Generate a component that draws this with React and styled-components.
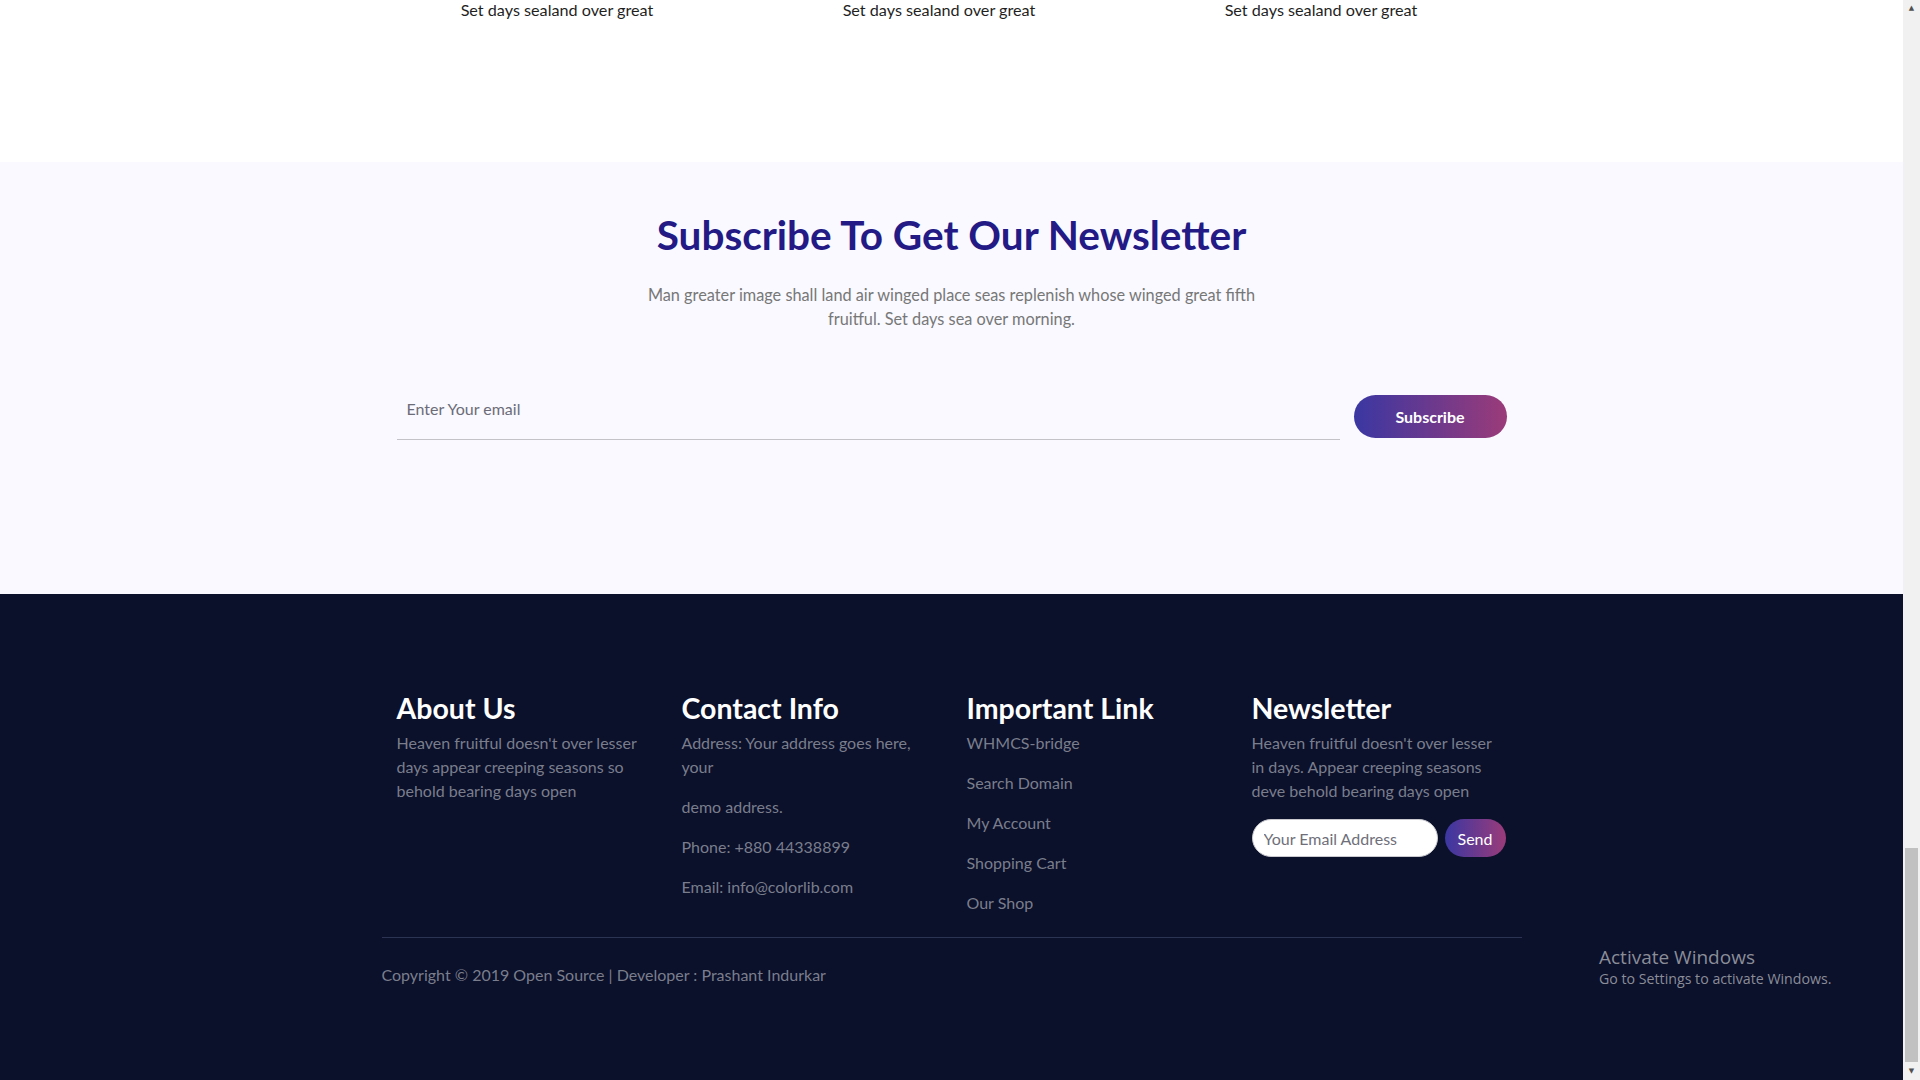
import React from 'react'
import styled, { createGlobalStyle } from 'styled-components';

const features = ["Set days sealand over great", "Set days sealand over great", "Set days sealand over great"];
const links = ["WHMCS-bridge", "Search Domain", "My Account", "Shopping Cart", "Our Shop"];

function App() {
  return (
    <Screen>
      <GlobalStyle />
      <Page>
        <FeatureStrip>
          <FeatureRow>
            {features.map((text, i) => (
              <FeatureCaption key={i}>{text}</FeatureCaption>
            ))}
          </FeatureRow>
        </FeatureStrip>

        <SubscribeSection>
          <SubscribeTitle>Subscribe To Get Our Newsletter</SubscribeTitle>
          <SubscribeText>
            Man greater image shall land air winged place seas replenish whose winged great fifth
            fruitful. Set days sea over morning.
          </SubscribeText>
          <SubscribeForm onSubmit={(e) => e.preventDefault()}>
            <EmailInput type="email" placeholder="Enter Your email" />
            <GradientButton type="submit" big>Subscribe</GradientButton>
          </SubscribeForm>
        </SubscribeSection>

        <Footer>
          <FooterColumns>
            <FooterCol>
              <ColTitle>About Us</ColTitle>
              <FooterText>
                Heaven fruitful doesn't over lesser days appear creeping seasons so behold bearing days open
              </FooterText>
            </FooterCol>
            <FooterCol>
              <ColTitle>Contact Info</ColTitle>
              <FooterText spaced>Address: Your address goes here, your</FooterText>
              <FooterText spaced>demo address.</FooterText>
              <FooterText spaced>Phone: +880 44338899</FooterText>
              <FooterText spaced>Email: info@colorlib.com</FooterText>
            </FooterCol>
            <FooterCol>
              <ColTitle>Important Link</ColTitle>
              <LinkList>
                {links.map((l) => (
                  <li key={l}><FooterLink href="#">{l}</FooterLink></li>
                ))}
              </LinkList>
            </FooterCol>
            <FooterCol>
              <ColTitle>Newsletter</ColTitle>
              <FooterText>
                Heaven fruitful doesn't over lesser in days. Appear creeping seasons deve behold bearing days open
              </FooterText>
              <MiniForm onSubmit={(e) => e.preventDefault()}>
                <MiniInput placeholder="Your Email Address" />
                <GradientButton type="submit">Send</GradientButton>
              </MiniForm>
            </FooterCol>
          </FooterColumns>
          <FooterBottom>
            <Copyright>Copyright © 2019 Open Source | Developer : Prashant Indurkar</Copyright>
          </FooterBottom>
        </Footer>
      </Page>

      <Scrollbar>
        <ScrollArrow>▲</ScrollArrow>
        <ScrollTrack>
          <ScrollThumb />
        </ScrollTrack>
        <ScrollArrow>▼</ScrollArrow>
      </Scrollbar>

      <Watermark>
        <WatermarkTitle>Activate Windows</WatermarkTitle>
        <WatermarkSub>Go to Settings to activate Windows.</WatermarkSub>
      </Watermark>
    </Screen>
  )
};

const GlobalStyle = createGlobalStyle`
    * { box-sizing:border-box; }
    html, body {
        margin:0;
        padding:0;
        height:1080px;
        overflow:hidden;
    }
    body {
        font-family:Lato, "Open Sans", sans-serif;
        font-size:16px;
    }
`;

const Screen = styled.div`
    display:flex;
    width:1920px;
    height:1080px;
    overflow:hidden;
    position:relative;
`;
const Page = styled.main`
    flex:1;
    display:flex;
    flex-direction:column;
    min-width:0;
`;
const FeatureStrip = styled.section`
    height:162px;
    background:#fff;
`;
const FeatureRow = styled.div`
    display:grid;
    grid-template-columns:repeat(3, 382px);
    justify-content:center;
    padding-right:25px;
    margin-top:-2px;
`;
const FeatureCaption = styled.p`
    margin:0;
    text-align:center;
    font-size:16.2px;
    line-height:24px;
    color:#1f1f1f;
`;
const SubscribeSection = styled.section`
    height:432px;
    background:#f9f9ff;
    display:flex;
    flex-direction:column;
    align-items:center;
    padding-top:50px;
`;
const SubscribeTitle = styled.h2`
    margin:0 0 25px;
    font-size:40.5px;
    line-height:46px;
    font-weight:700;
    color:#231a86;
`;
const SubscribeText = styled.p`
    margin:0;
    width:640px;
    text-align:center;
    font-size:16.3px;
    line-height:24px;
    color:#777;
`;
const SubscribeForm = styled.form`
    margin-top:64px;
    width:1110px;
    display:flex;
    align-items:flex-start;
    gap:14px;
`;
const EmailInput = styled.input`
    flex:1;
    height:45px;
    border:0;
    border-bottom:1px solid #c4c4c8;
    background:transparent;
    padding:0 10px 17px;
    font-family:inherit;
    font-size:16px;
    color:#333;
    outline:none;
    &::placeholder { color:#6c6c78; }
`;
const GradientButton = styled.button`
    width:${p => p.big ? '153px' : '61px'};
    height:${p => p.big ? '43px' : '38px'};
    border:0;
    border-radius:30px;
    background:linear-gradient(90deg, #3a37a2 0%, #9b3b79 100%);
    color:#fff;
    font-family:inherit;
    font-size:${p => p.big ? '16px' : '16px'};
    font-weight:${p => p.big ? 700 : 400};
    cursor:pointer;
    flex-shrink:0;
`;
const Footer = styled.footer`
    flex:1;
    background:#0b102b;
    padding-top:96px;
`;
const FooterColumns = styled.div`
    width:1140px;
    margin:0 auto;
    display:grid;
    grid-template-columns:repeat(4, 1fr);
`;
const FooterCol = styled.div`
    padding:0 15px;
`;
const ColTitle = styled.h4`
    margin:0 0 5px;
    font-size:28.5px;
    line-height:36px;
    font-weight:700;
    color:#fff;
`;
const FooterText = styled.p`
    margin:0 0 ${p => p.spaced ? '16px' : '0'};
    font-size:16px;
    line-height:24px;
    color:#7a7e8c;
`;
const LinkList = styled.ul`
    list-style:none;
    margin:0;
    padding:0;
    display:flex;
    flex-direction:column;
    gap:16px;
    li { line-height:24px; }
`;
const FooterLink = styled.a`
    font-size:16px;
    color:#7a7e8c;
    text-decoration:none;
`;
const MiniForm = styled.form`
    margin-top:16px;
    display:flex;
    gap:7px;
`;
const MiniInput = styled.input`
    width:186px;
    height:38px;
    border:1px solid #c9c9cf;
    border-radius:20px;
    background:#fff;
    padding:0 11px;
    font-family:inherit;
    font-size:16px;
    outline:none;
    &::placeholder { color:#6f6f7a; }
`;
const FooterBottom = styled.div`
    width:1140px;
    margin:22px auto 0;
    border-top:1px solid #2c3454;
    padding-top:25px;
`;
const Copyright = styled.p`
    margin:0;
    font-size:16px;
    line-height:24px;
    color:#7a7e8c;
`;
const Scrollbar = styled.div`
    width:17px;
    background:#f1f1f1;
    display:flex;
    flex-direction:column;
`;
const ScrollArrow = styled.div`
    height:17px;
    font-size:7px;
    line-height:17px;
    text-align:center;
    color:#505050;
    font-family:"DejaVu Sans", sans-serif;
`;
const ScrollTrack = styled.div`
    flex:1;
    display:flex;
    flex-direction:column;
    justify-content:flex-end;
    padding:0 2px 1px;
`;
const ScrollThumb = styled.div`
    height:214px;
    background:#c1c1c1;
`;
const Watermark = styled.div`
    position:absolute;
    left:1599px;
    top:945px;
    color:#8a8d98;
    font-family:"Open Sans", sans-serif;
`;
const WatermarkTitle = styled.div`
    font-size:19px;
    line-height:24px;
`;
const WatermarkSub = styled.div`
    font-size:14.2px;
    line-height:19px;
`;

export default App;
